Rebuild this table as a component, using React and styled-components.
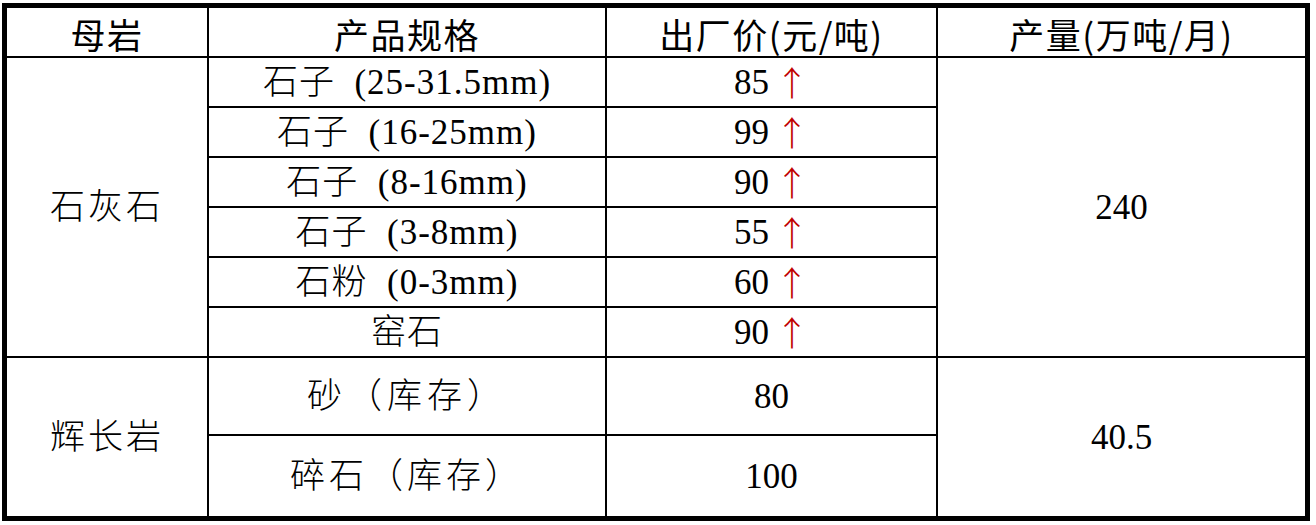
import React from "react";
import styled, { createGlobalStyle } from "styled-components";

const Global = createGlobalStyle`
  html, body { margin: 0; padding: 0; background: #fff; }
  body { font-family: "Liberation Serif", "Noto Sans CJK SC", serif; }
`;

const Page = styled.div`
  padding: 3px 0 0 2px;
`;

const Sheet = styled.div`
  display: grid;
  grid-template-columns: 200px 396px 329px 367px;
  grid-template-rows: 48px repeat(6, 48px) 76px 80px;
  gap: 2px;
  padding: 5px;
  background: #000;
  width: max-content;
`;

const Cell = styled.div`
  background: #fff;
  display: flex;
  align-items: center;
  justify-content: center;
  white-space: pre;
  color: #000;
  line-height: 1;
  grid-row: ${(p) => (p.$span ? `span ${p.$span}` : "auto")};
`;

const HeadCell = styled(Cell)`
  font-family: "Noto Sans CJK SC", sans-serif;
  font-size: 35px;
  font-weight: 400;
  letter-spacing: 1.5px;
  padding-top: 2px;
`;

const BodyCell = styled(Cell)`
  font-family: "Liberation Serif", "Noto Sans CJK SC", serif;
  font-size: 35px;
  font-weight: 300;
  letter-spacing: ${(p) => p.$spacing || "0"};
`;

const Up = styled.span`
  font-family: "Noto Sans CJK SC", sans-serif;
  font-weight: 300;
  color: #c00000;
  margin-left: 6px;
  font-size: 34px;
  letter-spacing: 0;
`;

const limestone = [
  { spec: "石子  (25-31.5mm)", price: "85" },
  { spec: "石子  (16-25mm)", price: "99" },
  { spec: "石子  (8-16mm)", price: "90" },
  { spec: "石子  (3-8mm)", price: "55" },
  { spec: "石粉  (0-3mm)", price: "60" },
  { spec: "窑石", price: "90" },
];

export default function App() {
  return (
    <Page>
      <Global />
      <Sheet>
        <HeadCell>母岩</HeadCell>
        <HeadCell>产品规格</HeadCell>
        <HeadCell>出厂价(元/吨)</HeadCell>
        <HeadCell>产量(万吨/月)</HeadCell>

        {limestone.map((r, i) => (
          <React.Fragment key={i}>
            {i === 0 && (
              <BodyCell $span={6} $spacing="3px">
                石灰石
              </BodyCell>
            )}
            <BodyCell $spacing="1px">{r.spec}</BodyCell>
            <BodyCell>
              {r.price}
              <Up>↑</Up>
            </BodyCell>
            {i === 0 && <BodyCell $span={6}>240</BodyCell>}
          </React.Fragment>
        ))}

        <BodyCell $span={2} $spacing="3px">
          辉长岩
        </BodyCell>
        <BodyCell $spacing="5px">砂（库存）</BodyCell>
        <BodyCell>80</BodyCell>
        <BodyCell $span={2}>40.5</BodyCell>
        <BodyCell $spacing="4px">碎石（库存）</BodyCell>
        <BodyCell>100</BodyCell>
      </Sheet>
    </Page>
  );
}
